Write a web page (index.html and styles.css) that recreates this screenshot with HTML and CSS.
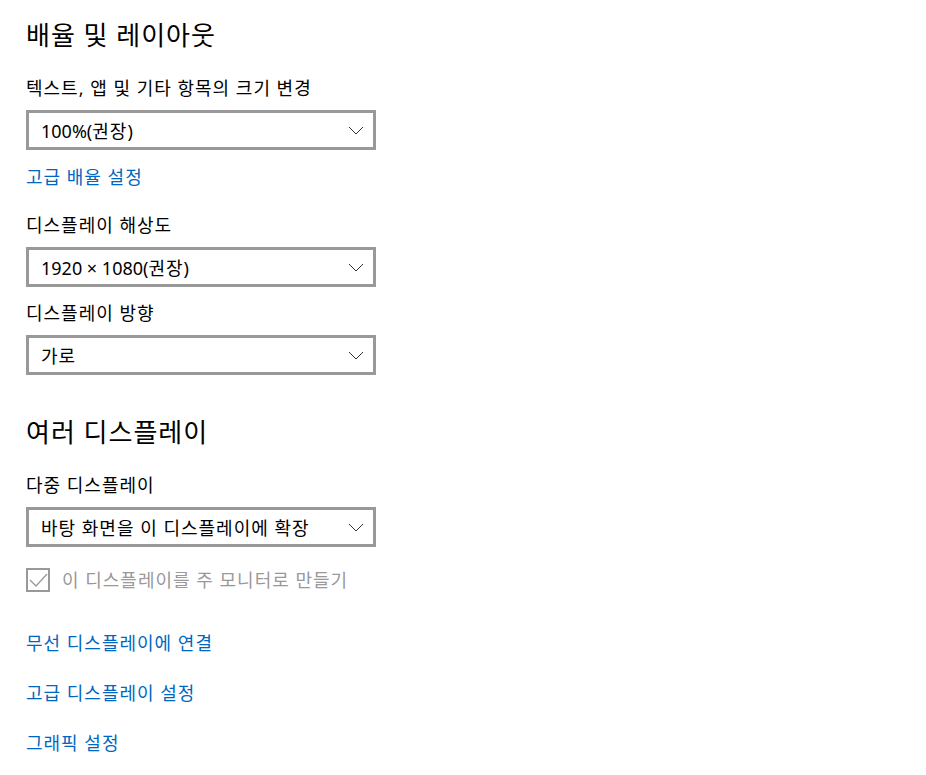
FILE: index.html
```html
<!DOCTYPE html>
<html lang="ko">
<head>
    <meta charset="UTF-8">
    <meta name="viewport" content="width=device-width, initial-scale=1.0">
    <title>디스플레이</title>
    <link rel="stylesheet" href="styles.css">
</head>
<body>

    <div class="page">
        <h2 class="title">배율 및 레이아웃</h2>

        <div class="label first">텍스트, 앱 및 기타 항목의 크기 변경</div>
        <div class="select">
            <span><span class="num">100%(</span>권장<span class="num">)</span></span>
            <svg class="chev" width="16" height="9" viewBox="0 0 16 9"><path d="M1 1 L8 8 L15 1" fill="none" stroke="#333" stroke-width="1"/></svg>
        </div>
        <a class="link after-select" href="#">고급 배율 설정</a>

        <div class="label after-link">디스플레이 해상도</div>
        <div class="select">
            <span><span class="num">1920 × 1080(</span>권장<span class="num">)</span></span>
            <svg class="chev" width="16" height="9" viewBox="0 0 16 9"><path d="M1 1 L8 8 L15 1" fill="none" stroke="#333" stroke-width="1"/></svg>
        </div>

        <div class="label after-select2">디스플레이 방향</div>
        <div class="select">
            <span>가로</span>
            <svg class="chev" width="16" height="9" viewBox="0 0 16 9"><path d="M1 1 L8 8 L15 1" fill="none" stroke="#333" stroke-width="1"/></svg>
        </div>

        <h2 class="title second">여러 디스플레이</h2>

        <div class="label first">다중 디스플레이</div>
        <div class="select">
            <span>바탕 화면을 이 디스플레이에 확장</span>
            <svg class="chev" width="16" height="9" viewBox="0 0 16 9"><path d="M1 1 L8 8 L15 1" fill="none" stroke="#333" stroke-width="1"/></svg>
        </div>

        <label class="check">
            <span class="box">
                <svg width="20" height="20" viewBox="0 0 20 20"><path d="M2 10 L8 16 L19 4" fill="none" stroke="#999" stroke-width="1.3"/></svg>
            </span>
            <span>이 디스플레이를 주 모니터로 만들기</span>
        </label>

        <a class="link after-check" href="#">무선 디스플레이에 연결</a>
        <a class="link next" href="#">고급 디스플레이 설정</a>
        <a class="link next" href="#">그래픽 설정</a>
    </div>

</body>
</html>
```

FILE: styles.css
```css
/* 디스플레이 설정 화면 */
body {
    margin: 0;
    background: #fff;
    color: #000;
    font-family: 'Noto Sans', 'Noto Sans CJK KR', sans-serif;
}

.page {
    padding: 19px 0 0 26px;
    display: flex;
    flex-direction: column;
    align-items: flex-start;
}

/* 섹션 제목 */
.title {
    margin: 0;
    font-size: 26px;
    font-weight: normal;
    line-height: 32px;
    letter-spacing: 1px;
}

.title.second {
    margin-top: 41px;
}

/* 항목 이름 */
.label {
    font-size: 18px;
    line-height: 24px;
    letter-spacing: 1px;
    margin-bottom: 10px;
}

.label.first {
    margin-top: 25px;
}

.label.after-link {
    margin-top: 24px;
}

.label.after-select2 {
    margin-top: 14px;
}

/* 드롭다운 상자 */
.select {
    box-sizing: border-box;
    width: 350px;
    height: 40px;
    border: 3px solid #999;
    display: flex;
    align-items: center;
    justify-content: space-between;
    padding: 0 9px 0 12px;
    font-size: 18px;
    letter-spacing: 1px;
}

/* 숫자는 자간 없이 */
.num {
    letter-spacing: 0;
}

.chev {
    display: block;
}

/* 파란 링크 */
.link {
    color: #0067c0;
    text-decoration: none;
    font-size: 18px;
    line-height: 24px;
    letter-spacing: 1px;
}

.link.after-select {
    margin-top: 15px;
}

.link.after-check {
    margin-top: 39px;
}

.link.next {
    margin-top: 26px;
}

/* 비활성 체크박스 */
.check {
    margin-top: 21px;
    display: flex;
    align-items: center;
    gap: 12px;
    color: #999;
    font-size: 18px;
    line-height: 24px;
    letter-spacing: 1px;
}

.box {
    box-sizing: border-box;
    width: 24px;
    height: 24px;
    border: 2px solid #999;
    display: flex;
    align-items: center;
    justify-content: center;
}
```
